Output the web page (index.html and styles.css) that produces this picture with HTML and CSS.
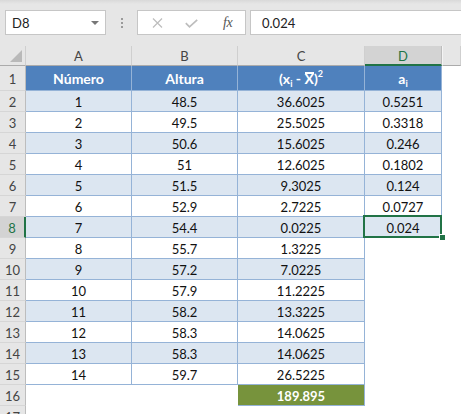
FILE: index.html
```html
<!DOCTYPE html>
<html lang="es">
<head>
  <meta charset="UTF-8" />
  <meta name="viewport" content="width=device-width, initial-scale=1" />
  <link rel="stylesheet" href="styles.css">
</head>
<body>
  <div class="toolbar">
    <div class="namebox"><span>D8</span><span class="caret"></span></div>
    <div class="grip"><i></i><i></i><i></i></div>
    <div class="fxbox">
      <svg class="cancel" width="11" height="10" viewBox="0 0 11 10">
        <path d="M1 0.5 L10 9.5 M10 0.5 L1 9.5" stroke="#bdbdbd" stroke-width="1.2" fill="none"/>
      </svg>
      <svg class="check" width="13" height="9" viewBox="0 0 13 9">
        <path d="M0.8 4.2 L4.5 7.8 L12.2 0.8" stroke="#bdbdbd" stroke-width="1.7" fill="none"/>
      </svg>
      <span class="fx">fx</span>
    </div>
    <div class="formula">0.024</div>
  </div>

  <div class="sheet">
    <div class="row colhead">
      <div class="corner"><span class="tri"></span></div>
      <div>A</div><div>B</div><div>C</div><div class="sel">D</div><div class="rest"></div>
    </div>

    <div class="row head">
      <div class="rh">1</div>
      <div class="c"><span>Número</span></div>
      <div class="c"><span>Altura</span></div>
      <div class="c"><span>(x<sub>i</sub> - <span class="bar">X</span>)<sup>2</sup></span></div>
      <div class="c"><span>a<sub>i</sub></span></div>
      <div class="e"></div>
    </div>

    <div class="row band"><div class="rh">2</div><div class="c">1</div><div class="c">48.5</div><div class="c">36.6025</div><div class="c">0.5251</div><div class="e"></div></div>
    <div class="row"><div class="rh">3</div><div class="c">2</div><div class="c">49.5</div><div class="c">25.5025</div><div class="c">0.3318</div><div class="e"></div></div>
    <div class="row band"><div class="rh">4</div><div class="c">3</div><div class="c">50.6</div><div class="c">15.6025</div><div class="c">0.246</div><div class="e"></div></div>
    <div class="row"><div class="rh">5</div><div class="c">4</div><div class="c">51</div><div class="c">12.6025</div><div class="c">0.1802</div><div class="e"></div></div>
    <div class="row band"><div class="rh">6</div><div class="c">5</div><div class="c">51.5</div><div class="c">9.3025</div><div class="c">0.124</div><div class="e"></div></div>
    <div class="row"><div class="rh">7</div><div class="c">6</div><div class="c">52.9</div><div class="c">2.7225</div><div class="c">0.0727</div><div class="e"></div></div>
    <div class="row band"><div class="rh sel">8</div><div class="c">7</div><div class="c">54.4</div><div class="c">0.0225</div><div class="c active">0.024</div><div class="e"></div></div>
    <div class="row"><div class="rh">9</div><div class="c">8</div><div class="c">55.7</div><div class="c">1.3225</div><div class="e"></div><div class="e"></div></div>
    <div class="row band"><div class="rh">10</div><div class="c">9</div><div class="c">57.2</div><div class="c">7.0225</div><div class="e"></div><div class="e"></div></div>
    <div class="row"><div class="rh">11</div><div class="c">10</div><div class="c">57.9</div><div class="c">11.2225</div><div class="e"></div><div class="e"></div></div>
    <div class="row band"><div class="rh">12</div><div class="c">11</div><div class="c">58.2</div><div class="c">13.3225</div><div class="e"></div><div class="e"></div></div>
    <div class="row"><div class="rh">13</div><div class="c">12</div><div class="c">58.3</div><div class="c">14.0625</div><div class="e"></div><div class="e"></div></div>
    <div class="row band"><div class="rh">14</div><div class="c">13</div><div class="c">58.3</div><div class="c">14.0625</div><div class="e"></div><div class="e"></div></div>
    <div class="row"><div class="rh">15</div><div class="c">14</div><div class="c">59.7</div><div class="c">26.5225</div><div class="e"></div><div class="e"></div></div>
    <div class="row"><div class="rh">16</div><div class="e"></div><div class="e"></div><div class="c total">189.895</div><div class="e"></div><div class="e"></div></div>
    <div class="row"><div class="rh">17</div><div class="e"></div><div class="e"></div><div class="e"></div><div class="e"></div><div class="e"></div></div>
  </div>
</body>
</html>
```

FILE: styles.css
```css
html, body {
  margin: 0;
  padding: 0;
  background: #fff;
  font-family: Lato, "Liberation Sans", sans-serif;
  overflow: hidden;
}

/* barra de fórmulas */
.toolbar {
  height: 46px;
  box-sizing: border-box;
  padding-top: 10px;
  display: flex;
  align-items: flex-start;
  background: linear-gradient(#d9d9d9, #e6e6e6 4px);
}
.namebox {
  margin-left: 5px;
  width: 101px;
  height: 25px;
  box-sizing: border-box;
  border: 1px solid #c6c6c6;
  background: #fff;
  display: flex;
  align-items: center;
  justify-content: space-between;
  padding: 0 6px;
  font-size: 13px;
  color: #222;
}
.caret {
  width: 0;
  height: 0;
  border-left: 4px solid transparent;
  border-right: 4px solid transparent;
  border-top: 4px solid #777;
}
.grip {
  width: 31px;
  height: 25px;
  display: flex;
  flex-direction: column;
  align-items: center;
  justify-content: center;
  gap: 2px;
}
.grip i {
  width: 2px;
  height: 2px;
  background: #9a9a9a;
}
.fxbox {
  width: 109px;
  height: 25px;
  box-sizing: border-box;
  border: 1px solid #c6c6c6;
  background: #fff;
  display: flex;
  align-items: center;
  padding-left: 14px;
}
.cancel { margin-right: 22px; }
.check { margin-right: 25px; margin-top: 1px; }
.fx {
  font-family: "Liberation Serif", serif;
  font-style: italic;
  font-size: 14px;
  color: #555;
  letter-spacing: -0.5px;
}
.formula {
  flex: 1;
  margin-left: 4px;
  height: 25px;
  box-sizing: border-box;
  border: 1px solid #c6c6c6;
  border-right: none;
  background: #fff;
  padding-left: 11px;
  display: flex;
  align-items: center;
  font-size: 13px;
  color: #222;
}

/* hoja */
.row {
  display: grid;
  grid-template-columns: 26px 106px 106px 127px 77px 1fr;
  height: 21px;
}
.row > div {
  box-sizing: border-box;
  display: flex;
  align-items: center;
  justify-content: center;
  font-size: 13px;
  color: #111;
  padding-top: 1px;
}
.colhead {
  height: 20px;
  background: #e6e6e6;
}
.colhead > div {
  color: #444;
  border-right: 1px solid #cfcfcf;
  border-bottom: 1px solid #ababab;
}
.colhead .sel {
  background: #d3d3d3;
  color: #217346;
  border-bottom: 2px solid #217346;
  border-right: 1px solid #bdbdbd;
}
.colhead .rest {
  border-left: 1px solid #f4f4f4;
}
.corner {
  align-items: flex-end !important;
  justify-content: flex-end !important;
  padding: 0 3px 3px 0;
}
.tri {
  width: 0;
  height: 0;
  border-left: 12px solid transparent;
  border-bottom: 12px solid #b9b9b9;
}

.rh {
  background: #e6e6e6;
  color: #444 !important;
  border-right: 1px solid #bdbdbd;
  border-bottom: 1px solid #d6d6d6;
}
.rh.sel {
  background: #d3d3d3;
  color: #217346 !important;
  border-right: 2px solid #217346;
}

.c {
  border-right: 1px solid #95b3d7;
  border-bottom: 1px solid #95b3d7;
}
.band .c { background: #dce6f1; }

.head { height: 25px; }
.head .c {
  background: #4f81bd;
  color: #fff;
  font-weight: 700;
  font-size: 14px;
  padding-top: 0;
}
.head sub { font-size: 9px; vertical-align: -3px; line-height: 0; }
.head sup { font-size: 9px; vertical-align: 7px; line-height: 0; }
.bar {
  display: inline-block;
  line-height: 10px;
  border-top: 2px solid #fff;
}

.total {
  background: #77933c !important;
  color: #fff !important;
  font-weight: 700;
}

.active { position: relative; }
.active::before {
  content: "";
  position: absolute;
  left: -2px;
  top: -2px;
  right: -1px;
  bottom: -1px;
  border: 2px solid #217346;
}
.active::after {
  content: "";
  position: absolute;
  right: -4px;
  bottom: -3px;
  width: 5px;
  height: 5px;
  background: #217346;
  border-left: 1px solid #fff;
  border-top: 1px solid #fff;
}
```
